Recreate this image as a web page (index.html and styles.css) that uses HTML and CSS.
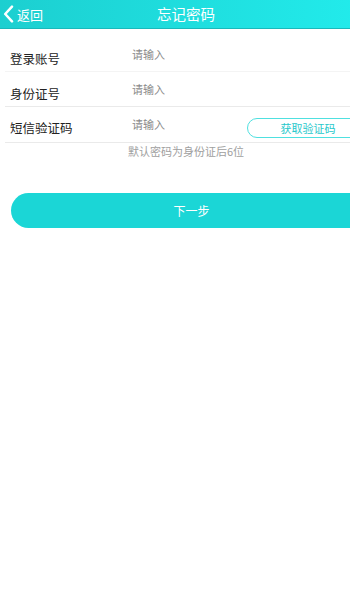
FILE: index.html
```html
<!DOCTYPE html>
<html lang="zh">
<head>
<meta charset="utf-8">
<link rel="stylesheet" href="styles.css">
</head>
<body>
<div class="page">
  <header class="topbar">
    <div class="back">
      <svg class="chev" width="11" height="18" viewBox="0 0 11 18"><path d="M9 1.6 L2.2 9 L9 16.4" fill="none" stroke="#fff" stroke-width="2.5" stroke-linecap="round" stroke-linejoin="round"/></svg>
      <span>返回</span>
    </div>
    <div class="title">忘记密码</div>
  </header>
  <main class="form">
    <div class="row row-first">
      <span class="label">登录账号</span>
      <span class="ph">请输入</span>
    </div>
    <div class="row">
      <span class="label">身份证号</span>
      <span class="ph">请输入</span>
    </div>
    <div class="row row-code">
      <span class="label">短信验证码</span>
      <span class="ph">请输入</span>
      <span class="code-btn">获取验证码</span>
    </div>
    <p class="hint">默认密码为身份证后6位</p>
    <div class="next">下一步</div>
  </main>
</div>
</body>
</html>
```
FILE: styles.css
```css
html, body { margin: 0; padding: 0; background: #fff; }
body { overflow: hidden; font-family: "Noto Sans CJK SC", "Noto Sans", sans-serif; }
.page { width: 372px; }
.topbar {
  height: 28px;
  background: linear-gradient(90deg, #1ccfd0, #22ecec);
  border-bottom: 1px solid #19b9bb;
  position: relative;
  display: flex;
  align-items: center;
  justify-content: center;
}
.back {
  position: absolute;
  left: 3px; top: 0; height: 28px;
  display: flex; align-items: center; gap: 3px;
  color: #fff; font-size: 13px;
}
.chev { display: block; }
.title { color: #fff; font-size: 14.5px; line-height: 28px; }
.form { padding-top: 12px; }
.row {
  margin-left: 5px;
  height: 34px;
  border-bottom: 1px solid #eaeaea;
  display: flex;
  align-items: flex-end;
  position: relative;
}
.row-first { height: 30px; border-bottom-color: #f4f4f4; }
.row-code { height: 35px; }
.label { width: 122px; padding-left: 5px; font-size: 12.5px; color: #222; line-height: 18px; padding-bottom: 3px; }
.ph { font-size: 11px; color: #8a8a8a; line-height: 16px; padding-bottom: 9px; }
.row-code .label { padding-bottom: 5px; }
.row-code .ph { padding-bottom: 10px; }
.code-btn {
  position: absolute;
  left: 242px; top: 11px;
  height: 18px;
  width: 120px;
  padding-right: 55px;
  border: 1px solid #4fe0e0;
  border-radius: 10px;
  color: #26c8cb;
  font-size: 11px;
  line-height: 18px;
  text-align: center;
}
.hint { margin: 0; text-align: center; font-size: 11px; color: #a0a0a0; line-height: 16px; }
.next {
  margin: 34px 0 0 11px;
  height: 35px;
  border-radius: 17.5px;
  background: #1bd6d6;
  color: #fff;
  font-size: 12px;
  line-height: 35px;
  text-align: center;
}
```
